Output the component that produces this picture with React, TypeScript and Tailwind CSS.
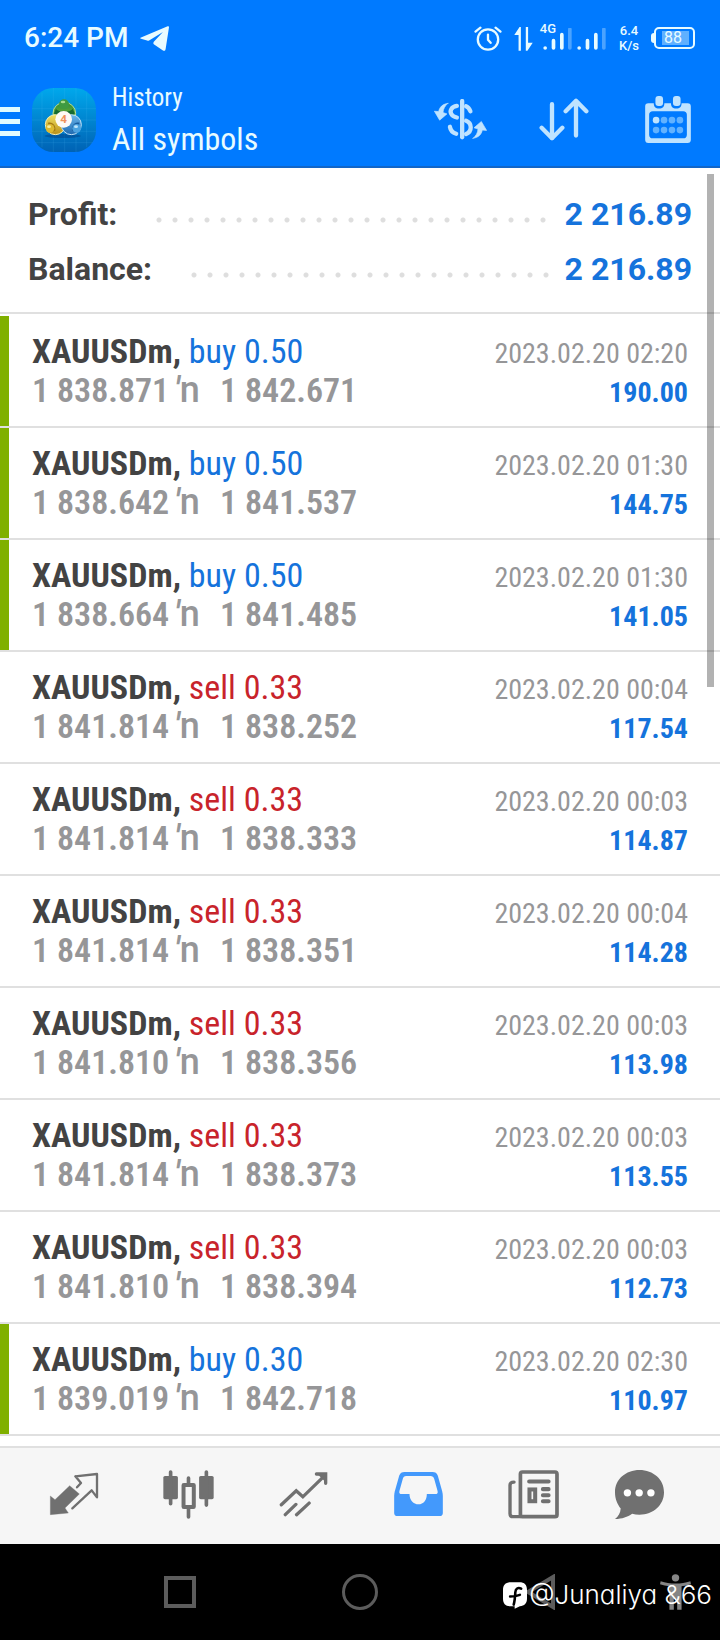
import type { ReactNode } from "react";

type Deal = {
  side: "buy" | "sell";
  volume: string;
  open: string;
  close: string;
  time: string;
  profit: string;
  target?: boolean;
};

const deals: Deal[] = [
  { side: "buy", volume: "0.50", open: "1 838.871", close: "1 842.671", time: "2023.02.20 02:20", profit: "190.00", target: true },
  { side: "buy", volume: "0.50", open: "1 838.642", close: "1 841.537", time: "2023.02.20 01:30", profit: "144.75", target: true },
  { side: "buy", volume: "0.50", open: "1 838.664", close: "1 841.485", time: "2023.02.20 01:30", profit: "141.05", target: true },
  { side: "sell", volume: "0.33", open: "1 841.814", close: "1 838.252", time: "2023.02.20 00:04", profit: "117.54" },
  { side: "sell", volume: "0.33", open: "1 841.814", close: "1 838.333", time: "2023.02.20 00:03", profit: "114.87" },
  { side: "sell", volume: "0.33", open: "1 841.814", close: "1 838.351", time: "2023.02.20 00:04", profit: "114.28" },
  { side: "sell", volume: "0.33", open: "1 841.810", close: "1 838.356", time: "2023.02.20 00:03", profit: "113.98" },
  { side: "sell", volume: "0.33", open: "1 841.814", close: "1 838.373", time: "2023.02.20 00:03", profit: "113.55" },
  { side: "sell", volume: "0.33", open: "1 841.810", close: "1 838.394", time: "2023.02.20 00:03", profit: "112.73" },
  { side: "buy", volume: "0.30", open: "1 839.019", close: "1 842.718", time: "2023.02.20 02:30", profit: "110.97", target: true },
];

function Signal() {
  return (
    <svg viewBox="0 0 86 66" className="h-[22px] w-[29px]" strokeWidth="11" strokeLinecap="round" stroke="#e8fbff" aria-hidden="true">
      <path d="M6 60v.1M31 38v22M56 20v40" />
      <path d="M80 4v56" stroke="#4ba3ff" />
    </svg>
  );
}

function StatusBar() {
  return (
    <div className="flex h-[76px] items-center pr-[25px] pl-6 text-[#e8fbff]">
      <span className="text-[28px] leading-8 font-medium">6:24 PM</span>
      <svg viewBox="0 0 86 74" className="ml-3 h-[25px] w-[29px]" fill="#e8fbff" aria-hidden="true">
        <path d="M3 34 82 1c3-1 4 0 4 3L76 68c-1 6-4 7-9 4L42 55c-3-2-3-5-1-8L68 18 27 43c-2 1-4 1-6 0L3 38c-3-1-3-3 0-4Z" />
      </svg>
      <div className="ml-auto flex items-center">
        <svg viewBox="0 0 84 76" className="h-[25px] w-[28px]" fill="none" stroke="#e8fbff" strokeWidth="7" strokeLinecap="round" aria-hidden="true">
          <circle cx="42" cy="41" r="31" />
          <path d="M42 26v16l8 9M4 17 19 5M80 17 65 5" />
        </svg>
        <svg viewBox="0 0 56 76" className="ml-3 h-[25px] w-[19px]" fill="#e8fbff" aria-hidden="true">
          <path d="M20 3v72h-7V27H0L16 3ZM35 73V3h7v48h14L40 75h-5Z" />
        </svg>
        <div className="relative ml-2 flex h-[24px] items-end">
          <span className="absolute -top-[5px] right-4 text-[13px] leading-4 font-medium">4G</span>
          <span className="ml-[2px] flex"><Signal /></span>
        </div>
        <div className="ml-[5px] flex h-[24px] items-end"><Signal /></div>
        <div className="ml-[13px] text-center text-[13px] leading-[15px] font-medium">
          <div>6.4</div>
          <div>K/s</div>
        </div>
        <div className="ml-3 flex items-center">
          <span className="h-[10px] w-[3px] rounded-l-sm bg-[#e8fbff]" />
          <span className="flex h-[22px] w-[41px] items-center rounded-[5px] border-2 border-[#e8fbff] pl-[6px]">
            <span className="flex h-[14px] w-[27px] items-center bg-[#5fb0ff] pl-[2px] text-[16px] leading-4">88</span>
          </span>
        </div>
      </div>
    </div>
  );
}

function AppLogo() {
  return (
    <svg viewBox="0 0 192 192" className="h-16 w-16" role="img" aria-label="MetaTrader 4">
      <defs>
        <linearGradient id="tile" x1="0" y1="0" x2="0" y2="1">
          <stop offset="0" stopColor="#00a8ec" />
          <stop offset="1" stopColor="#0062b4" />
        </linearGradient>
        <linearGradient id="green" x1="0" y1="0" x2="0" y2="1">
          <stop offset="0" stopColor="#2f8a35" />
          <stop offset="1" stopColor="#8cc63f" />
        </linearGradient>
        <linearGradient id="gold" x1="0" y1="0" x2="0" y2="1">
          <stop offset="0" stopColor="#f0e060" />
          <stop offset="1" stopColor="#b98f18" />
        </linearGradient>
        <linearGradient id="sky" x1="0" y1="0" x2="0" y2="1">
          <stop offset="0" stopColor="#6db8ec" />
          <stop offset="1" stopColor="#1c68b0" />
        </linearGradient>
      </defs>
      <rect width="192" height="192" rx="64" fill="url(#tile)" />
      <path d="M30 14v164M64 0v192M98 0v192M132 0v192M164 14v164M0 62h192M0 96h192M0 130h192M10 164h172" stroke="#5cc8f5" strokeOpacity=".2" strokeWidth="2" />
      <ellipse cx="92" cy="144" rx="54" ry="6" fill="#003f86" fillOpacity=".5" />
      <ellipse cx="97" cy="76" rx="34" ry="33" fill="url(#green)" stroke="#b5dc9a" strokeWidth="3" />
      <path d="M72 62c6 12 44 12 50 0l6 14c-8 16-54 16-62 0Z" fill="#176a31" />
      <circle cx="70" cy="110" r="30" fill="url(#gold)" stroke="#f7f0b5" strokeWidth="3" />
      <path d="M48 104c14-4 24 8 22 24l-18 6Z" fill="#a37a12" />
      <circle cx="118" cy="110" r="30" fill="url(#sky)" stroke="#c4e4f8" strokeWidth="3" />
      <path d="M142 104c-14-4-24 8-22 24l18 6Z" fill="#1a5d9e" />
      <circle cx="96" cy="49" r="15" fill="#3f9a41" />
      <ellipse cx="93" cy="42" rx="7" ry="4" fill="#a6dc8e" />
      <circle cx="54" cy="121" r="13" fill="#dcb92f" />
      <ellipse cx="51" cy="116" rx="6" ry="4" fill="#f8efa0" />
      <circle cx="134" cy="121" r="13" fill="#4aa2e0" />
      <ellipse cx="132" cy="116" rx="6" ry="4" fill="#c0e6fb" />
      <circle cx="95" cy="94" r="25" fill="#fdfaf5" />
      <text x="95" y="106" textAnchor="middle" fontSize="35" fontWeight="700" fill="#f0925a" fontFamily="Roboto">4</text>
    </svg>
  );
}

function Header() {
  return (
    <header className="border-b-2 border-[#1266c8] bg-[#007aff]">
      <StatusBar />
      <div className="flex h-[90px] items-center pr-[29px]">
        <button type="button" aria-label="Open menu" className="flex w-5 flex-col gap-[7px]">
          <span className="h-[5px] bg-[#e0fbff]" />
          <span className="h-[5px] bg-[#e0fbff]" />
          <span className="h-[5px] bg-[#e0fbff]" />
        </button>
        <div className="ml-3 pb-[2px]"><AppLogo /></div>
        <div className="ml-4 font-['Roboto_Condensed',Roboto,sans-serif] text-[#e8fbff]">
          <p className="text-[25px] leading-9">History</p>
          <h1 className="text-[32px] leading-[46px]">All symbols</h1>
        </div>
        <div className="ml-auto flex items-center pb-1 text-[#bfe3ff]">
          <button type="button" aria-label="Deposits and balance">
            <svg viewBox="0 0 158 124" className="h-[41px] w-[53px]" fill="none" stroke="currentColor" strokeLinecap="round" aria-hidden="true">
              <path d="M84 6v110" strokeWidth="13" />
              <path d="M68 21c-17 3-22 14-17 24 3 6 8 9 17 11M96 22c7 3 10 8 13 15M96 66c18 7 19 32 0 40M47 84c2 12 9 18 19 21" strokeWidth="13" />
              <path d="M41 13C24 16 16 24 13 38L0 37l16 27 22-19-12-4c1-12 6-20 15-28ZM117 119c17-3 25-11 28-25l13 1-16-27-22 19 12 4c-1 12-6 20-15 28Z" fill="currentColor" stroke="currentColor" strokeWidth="2" strokeLinejoin="round" />
            </svg>
          </button>
          <button type="button" aria-label="Sort" className="ml-[52px]">
            <svg viewBox="0 0 150 128" className="h-[43px] w-[50px]" fill="none" stroke="currentColor" strokeWidth="13" strokeLinecap="round" strokeLinejoin="round" aria-hidden="true">
              <path d="M39 18v102M8 89l31 31 31-31M111 112V8M80 39l31-31 31 31" />
            </svg>
          </button>
          <button type="button" aria-label="Choose period" className="ml-[56px]">
            <svg viewBox="0 0 138 142" className="h-[47px] w-[46px]" fill="currentColor" aria-hidden="true">
              <path fillRule="evenodd" d="M10 22h16c0 10 5 16 16 16s16-6 16-16h20c0 10 5 16 16 16s16-6 16-16h18c7 0 10 3 10 10v100c0 6-3 10-10 10H10c-7 0-10-4-10-10V32c0-7 3-10 10-10Zm13 24c-7 0-11 4-11 11v60c0 7 4 11 11 11h92c7 0 11-4 11-11V57c0-7-4-11-11-11Z" />
              <rect x="31" y="0" width="23" height="30" rx="9" />
              <rect x="84" y="0" width="23" height="30" rx="9" />
              <circle cx="33" cy="73" r="10" />
              <g fill="#62b2ff">
                <circle cx="57" cy="73" r="10" />
                <circle cx="81" cy="73" r="10" />
                <circle cx="105" cy="73" r="10" />
                <circle cx="33" cy="103" r="10" />
                <circle cx="57" cy="103" r="10" />
                <circle cx="81" cy="103" r="10" />
                <circle cx="105" cy="103" r="10" />
              </g>
            </svg>
          </button>
        </div>
      </div>
    </header>
  );
}

function SummaryRow({ label, value }: { label: string; value: string }) {
  return (
    <div className="flex h-[55px] items-center text-[32px] leading-9 font-bold">
      <dt className="text-[#434343]">{label}</dt>
      <span
        aria-hidden="true"
        className="mt-[13px] mr-3 ml-[34px] h-4 flex-1 bg-[radial-gradient(circle,#dedede_2px,transparent_3px)] bg-[length:16px_16px] bg-repeat-x"
      />
      <dd className="text-[#1573dc]">{value}</dd>
    </div>
  );
}

function DealRow({ deal }: { deal: Deal }) {
  return (
    <li className="flex border-b-2 border-[#e0e0e0]">
      <span className={deal.target ? "w-[9px] bg-[#80b000]" : "w-[9px]"} />
      <div className="flex h-[110px] flex-1 items-start justify-between pt-4 pr-8 pl-[23px] whitespace-nowrap">
        <div className="leading-[39px]">
          <p className="text-[34px]">
            <span className="font-bold text-[#434343]">XAUUSDm, </span>
            <span className={deal.side === "buy" ? "text-[#1573dc]" : "text-[#c8232b]"}>
              {deal.side} {deal.volume}
            </span>
          </p>
          <p className="flex text-[34px] font-semibold text-[#969698]">
            <span className="w-[142px]">{deal.open}</span>
            <span className="w-[46px] font-['Roboto',sans-serif] text-[36px] font-medium"><i>′</i>n</span>
            <span>{deal.close}</span>
          </p>
        </div>
        <div className="pt-[2px] text-right text-[28px] leading-[39px]">
          <p className="text-[#969698]">{deal.time}</p>
          <p className="font-bold text-[#1573dc]">{deal.profit}</p>
        </div>
      </div>
    </li>
  );
}

function Tab({ label, last, children }: { label: string; last?: boolean; children: ReactNode }) {
  return (
    <button
      type="button"
      aria-label={label}
      className={last ? "flex grow-[97] basis-0 items-center justify-center" : "flex grow-[115] basis-0 items-center justify-center"}
    >
      {children}
    </button>
  );
}

function TabBar() {
  return (
    <nav className="flex h-[98px] border-t-2 border-[#e0e0e0] bg-[#f6f6f6] pr-8 pb-1 pl-4 text-[#707070]">
      <Tab label="Quotes">
        <svg viewBox="0 0 150 132" className="h-11 w-[50px]" fill="none" stroke="currentColor" aria-hidden="true">
          <path d="M4 72 18 83 62 41 91 66 48 108 58 123 4 128Z" fill="currentColor" />
          <path d="M79 13 144 6V76L128 55 70 109M79 13 96 33 84 46" strokeWidth="7" strokeLinecap="round" strokeLinejoin="round" />
        </svg>
      </Tab>
      <Tab label="Chart">
        <svg viewBox="0 0 152 148" className="h-[49px] w-[51px]" aria-hidden="true">
          <g fill="currentColor">
            <rect x="0" y="18" width="44" height="70" rx="5" />
            <rect x="108" y="18" width="44" height="70" rx="5" />
          </g>
          <path d="M22 6v96M130 6v100M76 24v18M76 114v28" stroke="currentColor" strokeWidth="11" strokeLinecap="round" />
          <rect x="61" y="45" width="31" height="67" rx="1" fill="none" stroke="currentColor" strokeWidth="12" />
        </svg>
      </Tab>
      <Tab label="Trade">
        <svg viewBox="0 0 146 136" className="h-[45px] w-[49px]" fill="none" stroke="currentColor" strokeWidth="10" strokeLinecap="round" aria-hidden="true">
          <path d="M6 99 51 57 71 75 137 11M112 6h28v28M18 129 50 98M52 129 90 94" />
          <path d="M114 5h27v27Z" fill="currentColor" stroke="none" />
        </svg>
      </Tab>
      <Tab label="History">
        <svg viewBox="0 0 146 132" className="h-11 w-[49px] text-[#4399fc]" aria-hidden="true">
          <path d="M31 0h84c8 0 13 3 16 11l13 47c1 4 2 9 2 14v50c0 7-3 10-10 10H10c-7 0-10-3-10-10V72c0-5 1-10 2-14L15 11C18 3 23 0 31 0Z" fill="currentColor" />
          <path d="M36 12h73c6 0 9 3 11 8l10 36c2 7 0 10-7 10H98c0 19-10 31-25 31S46 85 46 66H23c-7 0-9-3-7-10l10-36c2-5 4-8 10-8Z" fill="#f6f6f6" />
        </svg>
      </Tab>
      <Tab label="News">
        <svg viewBox="0 0 152 146" className="h-[49px] w-[51px]" fill="none" stroke="currentColor" strokeLinecap="round" aria-hidden="true">
          <rect x="37" y="6" width="109" height="133" rx="6" strokeWidth="11" />
          <path d="M37 139H15c-6 0-9-3-9-9V45c0-6 3-9 12-9" strokeWidth="10" />
          <path d="M63 34h58M104 57h17M104 75h17M104 93h17" strokeWidth="12" />
          <rect x="64" y="58" width="17" height="35" strokeWidth="12" />
        </svg>
      </Tab>
      <Tab label="Messages" last>
        <svg viewBox="0 0 146 146" className="h-[49px] w-[49px]" aria-hidden="true">
          <path d="M73 0c41 0 73 28 73 66s-32 67-73 67c-8 0-15-1-22-3-14 10-29 15-51 16 10-7 16-17 17-31C7 101 0 86 0 66 0 28 32 0 73 0Z" fill="currentColor" />
          <g fill="#fff">
            <circle cx="37" cy="68" r="11" />
            <circle cx="72" cy="68" r="11" />
            <circle cx="107" cy="68" r="11" />
          </g>
        </svg>
      </Tab>
    </nav>
  );
}

function SystemBar() {
  return (
    <footer className="relative flex h-24 bg-black pl-[12.5%] text-[#5c5c5c]">
      <button type="button" aria-label="Recent apps" className="flex w-2/7 items-center justify-center">
        <span className="h-8 w-8 border-4 border-current" />
      </button>
      <button type="button" aria-label="Home" className="flex w-2/7 items-center justify-center">
        <span className="h-9 w-9 rounded-full border-[3px] border-current" />
      </button>
      <button type="button" aria-label="Back" className="flex w-2/7 items-center justify-center">
        <svg viewBox="0 0 32 36" className="h-9 w-8" fill="none" stroke="currentColor" strokeWidth="4" aria-hidden="true">
          <path d="M4 18 29 3v30Z" />
        </svg>
      </button>
      <button type="button" aria-label="Accessibility" className="flex flex-1 items-center justify-center text-[#858585]">
        <svg viewBox="0 0 92 106" className="h-9 w-[31px]" fill="currentColor" aria-hidden="true">
          <circle cx="46" cy="11" r="11" />
          <path d="M2 21c14 5 28 7 44 7s30-2 44-7l2 9c-9 3-18 5-28 6v70H51V74H41v32H28V36c-10-1-19-3-28-6Z" />
        </svg>
      </button>
      <div className="absolute top-[35px] right-2 flex items-center text-white">
        <svg viewBox="0 0 74 82" className="h-[27px] w-6" aria-hidden="true">
          <path d="M24 0h26c17 0 24 8 24 24v26c0 15-8 23-22 24l-16 8v-8H24C8 74 0 66 0 50V24C0 8 8 0 24 0Z" fill="#fff" />
          <path d="M56 20c-10-5-17 0-18 11-1 18-2 28-5 38M22 44c11 0 20-1 30-5" fill="none" stroke="#000" strokeWidth="8" strokeLinecap="round" />
        </svg>
        <span className="ml-[2px] font-['Inter',sans-serif] text-[26px] leading-8 font-light [font-feature-settings:'cv11']">@Junaliya &amp;66</span>
      </div>
    </footer>
  );
}

export default function App() {
  return (
    <div className="flex min-h-screen flex-col bg-white font-['Roboto',sans-serif]">
      <Header />
      <main className="relative flex-1 pb-[10px]">
        <dl className="border-b-2 border-[#e0e0e0] pt-[18px] pr-7 pb-4 pl-7">
          <SummaryRow label="Profit:" value="2 216.89" />
          <SummaryRow label="Balance:" value="2 216.89" />
        </dl>
        <ul className="pt-[2px] font-['Roboto_Condensed',Roboto,sans-serif]">
          {deals.map((deal, i) => (
            <DealRow key={i} deal={deal} />
          ))}
        </ul>
        <span aria-hidden="true" className="absolute top-[6px] right-[6px] h-[513px] w-[7px] bg-black/30" />
      </main>
      <TabBar />
      <SystemBar />
    </div>
  );
}
